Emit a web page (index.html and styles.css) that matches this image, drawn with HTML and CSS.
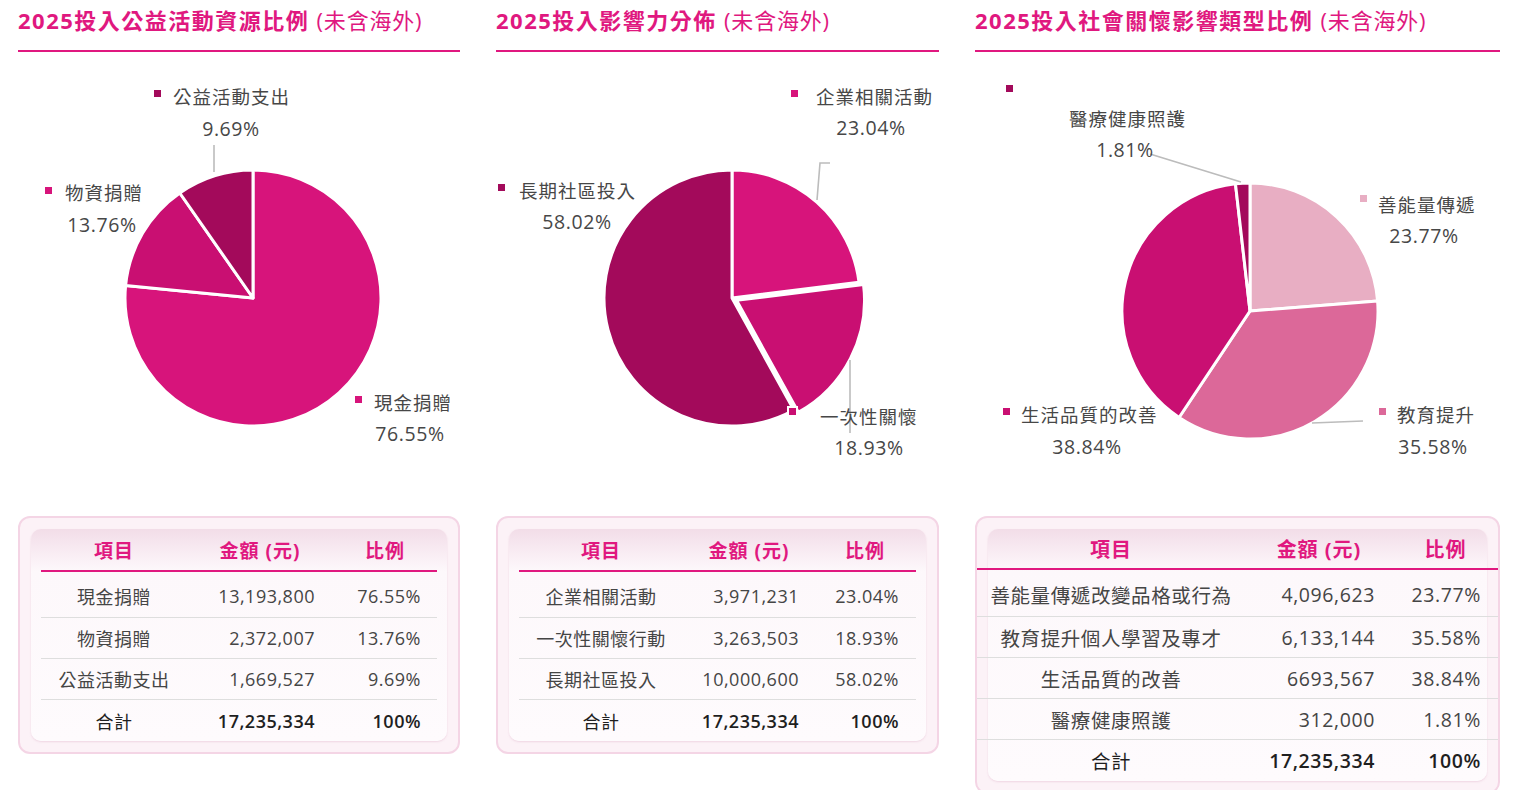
FILE: index.html
```html
<!DOCTYPE html>
<html lang="zh-Hant">
<head>
<meta charset="utf-8">
<title>2025 投入比例</title>
<link rel="stylesheet" href="styles.css">
</head>
<body>
<main class="page">

  <section class="col col-1">
    <h2 class="title">2025投入公益活動資源比例 <span class="sub">(未含海外)</span></h2>
    <svg class="chart" viewBox="0 0 442 464" width="442" height="464">
      <g class="pie">
        <path class="c1" d="M235,246 L235,118 A128,128 0 1 1 107.61,233.55 Z"/>
        <path class="c2" d="M235,246 L107.61,233.55 A128,128 0 0 1 161.80,141.00 Z"/>
        <path class="c3" d="M235,246 L161.80,141.00 A128,128 0 0 1 235,118 Z"/>
      </g>
      <path class="leader" d="M196,93 L196,120"/>
      <rect class="m c3" x="136" y="38" width="7" height="7"/>
      <text class="lbl" x="155" y="52">公益活動支出</text>
      <text class="pct" x="213" y="83.5">9.69%</text>
      <rect class="m c1" x="27" y="135" width="7" height="7"/>
      <text class="lbl" x="47" y="148">物資捐贈</text>
      <text class="pct" x="84" y="179.5">13.76%</text>
      <rect class="m c1" x="337" y="344" width="7" height="7"/>
      <text class="lbl" x="356" y="358">現金捐贈</text>
      <text class="pct" x="392" y="388.5">76.55%</text>
    </svg>
    <div class="card">
      <div class="panel">
        <div class="grid g1">
          <div class="tr th"><span>項目</span><span>金額 (元)</span><span>比例</span></div>
          <div class="tr first"><span>現金捐贈</span><span>13,193,800</span><span>76.55%</span></div>
          <div class="tr"><span>物資捐贈</span><span>2,372,007</span><span>13.76%</span></div>
          <div class="tr"><span>公益活動支出</span><span>1,669,527</span><span>9.69%</span></div>
          <div class="tr total"><span>合計</span><span>17,235,334</span><span>100%</span></div>
        </div>
      </div>
    </div>
  </section>

  <section class="col col-2">
    <h2 class="title">2025投入影響力分佈 <span class="sub">(未含海外)</span></h2>
    <svg class="chart" viewBox="0 0 443 464" width="443" height="464">
      <g class="pie">
        <path class="c1" d="M236,246 L236,118 A128,128 0 0 1 363.03,230.28 Z"/>
        <path class="c2" transform="translate(4.5,2.3)" d="M236,246 L363.03,230.28 A128,128 0 0 1 297.87,358.05 Z"/>
        <path class="c3" d="M236,246 L297.87,358.05 A128,128 0 1 1 236,118 Z"/>
      </g>
      <path class="leader" d="M334,111 L324,111 L321,148"/>
      <path class="leader" d="M354,308 L354,381"/>
      <rect class="m c1" x="295" y="38" width="7" height="7"/>
      <text class="lbl" x="320" y="52">企業相關活動</text>
      <text class="pct" x="375" y="82.5">23.04%</text>
      <rect class="m c3" x="2" y="132" width="7" height="7"/>
      <text class="lbl" x="23" y="146">長期社區投入</text>
      <text class="pct" x="81" y="176.5">58.02%</text>
      <rect class="m c2 mb" x="292" y="355" width="9" height="9"/>
      <text class="lbl" x="324" y="372">一次性關懷</text>
      <text class="pct" x="373" y="402.5">18.93%</text>
    </svg>
    <div class="card">
      <div class="panel">
        <div class="grid g2">
          <div class="tr th"><span>項目</span><span>金額 (元)</span><span>比例</span></div>
          <div class="tr first"><span>企業相關活動</span><span>3,971,231</span><span>23.04%</span></div>
          <div class="tr"><span>一次性關懷行動</span><span>3,263,503</span><span>18.93%</span></div>
          <div class="tr"><span>長期社區投入</span><span>10,000,600</span><span>58.02%</span></div>
          <div class="tr total"><span>合計</span><span>17,235,334</span><span>100%</span></div>
        </div>
      </div>
    </div>
  </section>

  <section class="col col-3">
    <h2 class="title">2025投入社會關懷影響類型比例 <span class="sub">(未含海外)</span></h2>
    <svg class="chart" viewBox="0 0 525 464" width="525" height="464">
      <g class="pie">
        <path class="c4" d="M275,259 L275,131 A128,128 0 0 1 402.62,249.12 Z"/>
        <path class="c5" d="M275,259 L402.62,249.12 A128,128 0 0 1 204.05,365.54 Z"/>
        <path class="c2" d="M275,259 L204.05,365.54 A128,128 0 0 1 260.47,131.83 Z"/>
        <path class="c3" d="M275,259 L260.47,131.83 A128,128 0 0 1 275,131 Z"/>
      </g>
      <path class="leader" d="M175,102 L266,130"/>
      <path class="leader" d="M337,371 L388,369"/>
      <rect class="m c3" x="31" y="33" width="7" height="7"/>
      <text class="lbl" x="94" y="74">醫療健康照護</text>
      <text class="pct" x="150" y="104.5">1.81%</text>
      <rect class="m c4" x="385" y="143" width="7" height="7"/>
      <text class="lbl" x="403" y="160">善能量傳遞</text>
      <text class="pct" x="449" y="190.5">23.77%</text>
      <rect class="m c2" x="28" y="356" width="7" height="7"/>
      <text class="lbl" x="46" y="370">生活品質的改善</text>
      <text class="pct" x="112" y="401.5">38.84%</text>
      <rect class="m c5" x="404" y="356" width="7" height="7"/>
      <text class="lbl" x="422" y="370">教育提升</text>
      <text class="pct" x="458" y="401.5">35.58%</text>
    </svg>
    <div class="card">
      <div class="panel">
        <div class="grid g3">
          <div class="tr th"><span>項目</span><span>金額 (元)</span><span>比例</span></div>
          <div class="tr first"><span>善能量傳遞改變品格或行為</span><span>4,096,623</span><span>23.77%</span></div>
          <div class="tr"><span>教育提升個人學習及專才</span><span>6,133,144</span><span>35.58%</span></div>
          <div class="tr"><span>生活品質的改善</span><span>6693,567</span><span>38.84%</span></div>
          <div class="tr"><span>醫療健康照護</span><span>312,000</span><span>1.81%</span></div>
          <div class="tr total"><span>合計</span><span>17,235,334</span><span>100%</span></div>
        </div>
      </div>
    </div>
  </section>

</main>
</body>
</html>
```

FILE: styles.css
```css
html, body {
  margin: 0;
  padding: 0;
  background: #ffffff;
}

body {
  font-family: "Open Sans", "Noto Sans CJK TC", sans-serif;
  color: #4a4a4a;
  width: 1526px;
  height: 790px;
  overflow: hidden;
}

.page {
  display: grid;
  grid-template-columns: 442px 443px 525px;
  column-gap: 36px;
  padding-left: 18px;
  align-items: start;
}

.col {
  display: flex;
  flex-direction: column;
}

.title {
  margin: 0;
  height: 52px;
  box-sizing: border-box;
  padding-top: 1px;
  line-height: 38px;
  font-size: 22px;
  font-weight: 700;
  letter-spacing: 1.5px;
  color: #e0187f;
  border-bottom: 2px solid #e0187f;
  white-space: nowrap;
}

.title .sub {
  font-weight: 400;
  letter-spacing: 0.8px;
}

.chart {
  display: block;
  overflow: visible;
}

.pie path {
  stroke: #ffffff;
  stroke-width: 3;
  stroke-linejoin: round;
}

.c1 { fill: #d7147b; }
.c2 { fill: #c90f72; }
.c3 { fill: #a30a5b; }
.c4 { fill: #e8aec3; }
.c5 { fill: #dc6899; }

.m.mb {
  stroke: #ffffff;
  stroke-width: 2;
}

.leader {
  fill: none;
  stroke: #bcbcbc;
  stroke-width: 1.6;
}

.lbl {
  font-size: 18.5px;
  fill: #474747;
  letter-spacing: 1px;
}

.pct {
  font-size: 19.5px;
  fill: #474747;
  letter-spacing: 0.6px;
  text-anchor: middle;
}

/* ---------- table cards ---------- */
.card {
  border: 2px solid #f4d5e5;
  border-radius: 12px;
  background: #fcf2f7;
  padding: 11px;
}

.panel {
  border-radius: 10px;
  background: linear-gradient(#f2dde8 0, #faeff5 28px, #fdf8fb 42px, #fefbfd 100%);
  box-shadow: 0 1px 2px rgba(215, 160, 188, 0.35);
  padding: 0 10px;
}

.grid .tr {
  display: grid;
  align-items: center;
  height: 41px;
  box-sizing: border-box;
  border-bottom: 1px solid #dedede;
  font-size: 18px;
  letter-spacing: 0.5px;
  color: #454545;
  white-space: nowrap;
}

.grid .tr span:first-child {
  text-align: center;
}

.grid .tr span:nth-child(2),
.grid .tr span:nth-child(3) {
  text-align: right;
}

.grid .tr.th {
  height: 43px;
  border-bottom: 2.5px solid #e0187f;
  color: #e0187f;
  font-weight: 700;
  font-size: 19px;
  letter-spacing: 1px;
}

.grid .tr.th span {
  text-align: center !important;
  padding-right: 0 !important;
}

.grid .tr.first {
  height: 46px;
  padding-top: 2px;
}

.grid .tr.total {
  border-bottom: none;
  height: 41px;
  color: #1f1f1f;
}

.grid .tr.total span:nth-child(2),
.grid .tr.total span:nth-child(3) {
  font-weight: 600;
}

.g1 .tr {
  grid-template-columns: 146px 146px 104px;
}
.g1 .tr span:nth-child(2) { padding-right: 18px; }
.g1 .tr span:nth-child(3) { padding-right: 16px; }

.g2 .tr {
  grid-template-columns: 164px 132px 100px;
}
.g2 .tr span:nth-child(2) { padding-right: 16px; }
.g2 .tr span:nth-child(3) { padding-right: 16px; }

.g3 {
  margin: 0 -21px;
}
.g3 .tr {
  grid-template-columns: 268px 148px 105px;
  font-size: 19.5px;
  letter-spacing: 0.6px;
}
.g3 .tr.th {
  font-size: 20px;
  height: 41px;
}
.g3 .tr.first {
  height: 47px;
}
.g3 .tr span:nth-child(2) { padding-right: 18px; }
.g3 .tr span:nth-child(3) { padding-right: 17px; }
```
